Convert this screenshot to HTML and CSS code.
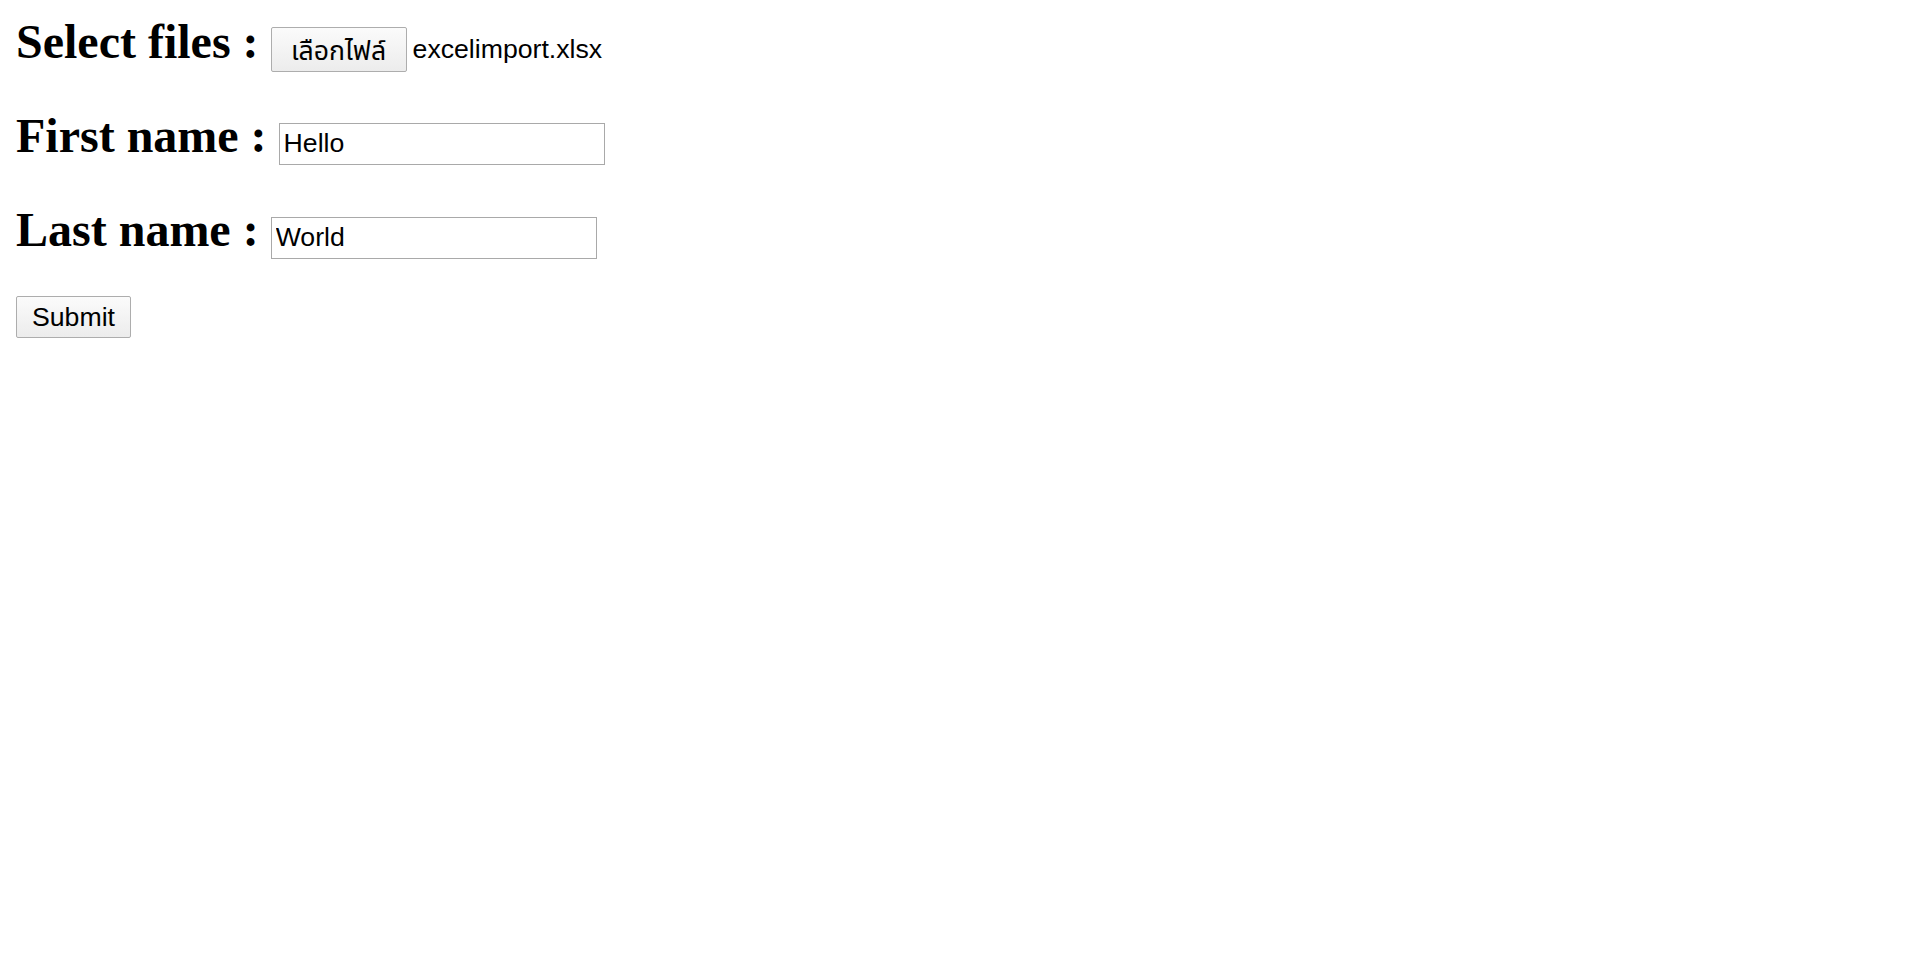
FILE: index.html
```html
<!DOCTYPE html>
<html lang="th">
<head>
    <meta charset="UTF-8">
    <title>Import Excel</title>
    <link rel="stylesheet" href="styles.css">
</head>
<body>
    <form class="import-form" action="#" method="post">
        <h2 class="row">Select files : <button type="button" class="btn file-btn">เลือกไฟล์</button> <span class="file-name">excelimport.xlsx</span></h2>
        <h2 class="row">First name : <input type="text" class="text-input" name="firstname" value="Hello"></h2>
        <h2 class="row">Last name : <input type="text" class="text-input" name="lastname" value="World"></h2>
        <button type="submit" class="btn submit-btn">Submit</button>
    </form>
</body>
</html>
```

FILE: styles.css
```css
body {
    margin: 0;
    background: #ffffff;
    color: #000000;
}

.import-form {
    padding: 14px 16px 0;
}

.row {
    height: 55px;
    margin: 0 0 39px;
    font-family: "Liberation Serif", "Times New Roman", serif;
    font-size: 48px;
    font-weight: bold;
    line-height: 55px;
    white-space: nowrap;
}

.btn {
    box-sizing: border-box;
    height: 45px;
    padding: 0 15px;
    border: 1px solid #adadad;
    border-radius: 2px;
    background: linear-gradient(#fbfbfb, #ececec);
    color: #000000;
    font-family: "Liberation Sans", Arial, "Noto Sans Thai", "Noto Sans", sans-serif;
    font-size: 26.67px;
    font-weight: normal;
    vertical-align: baseline;
}

.file-btn {
    width: 136px;
    margin-right: -6px;
    padding-top: 4px;
    vertical-align: -2px;
}

.file-name {
    font-family: "Liberation Sans", Arial, sans-serif;
    font-size: 26.67px;
    font-weight: normal;
}

.text-input {
    box-sizing: border-box;
    width: 326px;
    height: 42px;
    padding: 0 4px;
    border: 1px solid #a9a9a9;
    font-family: "Liberation Sans", Arial, sans-serif;
    font-size: 26.67px;
    font-weight: normal;
    vertical-align: baseline;
}

.submit-btn {
    width: 115px;
    height: 42px;
}
```
